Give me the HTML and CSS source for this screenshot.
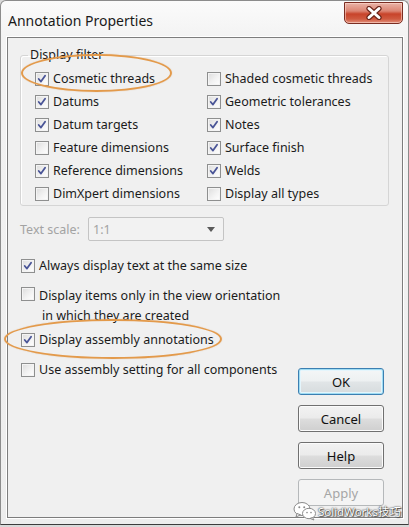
FILE: index.html
```html
<!DOCTYPE html>
<html>
<head>
<meta charset="utf-8">
<title>Annotation Properties</title>
<link rel="stylesheet" href="styles.css">
</head>
<body>
<div class="window">
  <div class="titlebar">
    <span class="title">Annotation Properties</span>
    <div class="close">
      <svg width="22" height="14" viewBox="0 0 22 14">
        <path d="M6 2.5 L16 11.5 M16 2.5 L6 11.5" stroke="#6b2418" stroke-width="5.2" stroke-linecap="round"/>
        <path d="M6 2.5 L16 11.5 M16 2.5 L6 11.5" stroke="#ffffff" stroke-width="3" stroke-linecap="round"/>
      </svg>
    </div>
  </div>
  <div class="client">
    <fieldset class="group">
      <legend>Display filter</legend>
      <div class="filter-grid">
        <label class="cb"><span class="box"><svg viewBox="0 0 14 14"><path d="M3.2 7 L5.8 10 L10.6 3.2"/></svg></span>Cosmetic threads</label>
        <label class="cb"><span class="box"></span>Shaded cosmetic threads</label>
        <label class="cb"><span class="box"><svg viewBox="0 0 14 14"><path d="M3.2 7 L5.8 10 L10.6 3.2"/></svg></span>Datums</label>
        <label class="cb"><span class="box"><svg viewBox="0 0 14 14"><path d="M3.2 7 L5.8 10 L10.6 3.2"/></svg></span>Geometric tolerances</label>
        <label class="cb"><span class="box"><svg viewBox="0 0 14 14"><path d="M3.2 7 L5.8 10 L10.6 3.2"/></svg></span>Datum targets</label>
        <label class="cb"><span class="box"><svg viewBox="0 0 14 14"><path d="M3.2 7 L5.8 10 L10.6 3.2"/></svg></span>Notes</label>
        <label class="cb"><span class="box"></span>Feature dimensions</label>
        <label class="cb"><span class="box"><svg viewBox="0 0 14 14"><path d="M3.2 7 L5.8 10 L10.6 3.2"/></svg></span>Surface finish</label>
        <label class="cb"><span class="box"><svg viewBox="0 0 14 14"><path d="M3.2 7 L5.8 10 L10.6 3.2"/></svg></span>Reference dimensions</label>
        <label class="cb"><span class="box"><svg viewBox="0 0 14 14"><path d="M3.2 7 L5.8 10 L10.6 3.2"/></svg></span>Welds</label>
        <label class="cb"><span class="box"></span>DimXpert dimensions</label>
        <label class="cb"><span class="box"></span>Display all types</label>
      </div>
    </fieldset>

    <div class="scale-row">
      <span class="scale-label">Text scale:</span>
      <div class="combo">
        <span class="combo-value">1:1</span>
        <svg class="combo-arrow" width="8" height="5" viewBox="0 0 8 5"><path d="M0 0 H8 L4 5 Z"/></svg>
      </div>
    </div>

    <div class="lower">
      <div class="options">
        <label class="opt opt-first"><span class="box"><svg viewBox="0 0 14 14"><path d="M3.2 7 L5.8 10 L10.6 3.2"/></svg></span>Always display text at the same size</label>
        <label class="opt opt-wide"><span class="box box-high"></span><span class="opt-text">Display items only in the view orientation<span class="second-line">in which they are created</span></span></label>
        <label class="opt opt-near"><span class="box"><svg viewBox="0 0 14 14"><path d="M3.2 7 L5.8 10 L10.6 3.2"/></svg></span>Display assembly annotations</label>
        <label class="opt opt-wide"><span class="box"></span>Use assembly setting for all components</label>
      </div>
      <div class="buttons">
        <div class="btn btn-default">OK</div>
        <div class="btn">Cancel</div>
        <div class="btn">Help</div>
        <div class="btn btn-disabled">Apply</div>
      </div>
    </div>

    <div class="mark mark-top"></div>
    <div class="mark mark-bottom"></div>
  </div>

  <div class="watermark">
    <svg class="wechat" width="24" height="20" viewBox="0 0 24 20">
      <ellipse cx="9" cy="8" rx="8" ry="6.5" fill="#ffffff" stroke="#8a8a8a" stroke-width="1"/>
      <path d="M4 12.5 L3 16 L7.5 13.8 Z" fill="#ffffff" stroke="#8a8a8a" stroke-width="1" stroke-linejoin="round"/>
      <ellipse cx="16" cy="12.5" rx="6.5" ry="5.2" fill="#ffffff" stroke="#8a8a8a" stroke-width="1"/>
      <path d="M19.5 16.5 L21 19 L17 17.4 Z" fill="#ffffff" stroke="#8a8a8a" stroke-width="1" stroke-linejoin="round"/>
      <circle cx="6.3" cy="6.3" r="1" fill="#8a8a8a"/>
      <circle cx="11.2" cy="6.3" r="1" fill="#8a8a8a"/>
      <circle cx="14" cy="11.6" r="0.8" fill="#8a8a8a"/>
      <circle cx="18" cy="11.6" r="0.8" fill="#8a8a8a"/>
    </svg>
    <span class="wm-text">SolidWorks技巧</span>
  </div>
</div>
</body>
</html>
```

FILE: styles.css
```css
html, body {
  margin: 0;
  padding: 0;
}

body {
  width: 409px;
  height: 527px;
  overflow: hidden;
  background: #d9d9d9;
  font-family: "Noto Sans", "Open Sans", "DejaVu Sans", sans-serif;
  font-size: 12.5px;
  color: #1b1b1b;
}

.window {
  position: relative;
  box-sizing: border-box;
  width: 409px;
  height: 525px;
  border: 1px solid #8c8c8c;
  border-bottom-color: #3c3c3c;
  border-radius: 6px 6px 0 0;
  background: linear-gradient(#fbfbfb, #f3f3f3 36px, #ededed);
  padding: 0 5px 6px 6px;
  display: flex;
  flex-direction: column;
}

/* ---------- title bar ---------- */
.titlebar {
  height: 36px;
  display: flex;
  justify-content: space-between;
  align-items: flex-start;
  padding-left: 1px;
}

.title {
  font-size: 14px;
  line-height: 20px;
  margin-top: 10px;
  color: #1a1a1a;
}

.close {
  box-sizing: border-box;
  width: 59px;
  height: 22px;
  margin-top: 1px;
  border: 1px solid #7a2d22;
  border-radius: 0 0 5px 5px;
  background: linear-gradient(#e9b3a7 0%, #dc8573 40%, #c8432a 55%, #cf5a40 80%, #e3907c 100%);
  box-shadow: inset 0 0 0 1px rgba(255, 220, 210, 0.55);
  display: flex;
  align-items: center;
  justify-content: center;
}

/* ---------- client area ---------- */
.client {
  position: relative;
  flex: 1;
  box-sizing: border-box;
  border: 1px solid #7d7d7d;
  background: #f0f0f0;
  display: flex;
  flex-direction: column;
  box-shadow: 0 0 0 1px #ffffff;
}

.group {
  margin: 9px 13px 0 12px;
  padding: 0;
  border: 1px solid #d5d5d5;
  border-radius: 3px;
  box-shadow: inset 1px 1px 0 #ffffff;
}

.group legend {
  margin-left: 7px;
  padding: 0 2px;
  font-size: 12.5px;
  line-height: 16px;
}

.filter-grid {
  display: grid;
  grid-template-columns: 172px 1fr;
  grid-auto-rows: 23px;
  padding: 4px 0 0 14px;
}

.cb {
  display: flex;
  align-items: center;
  white-space: nowrap;
}

.box {
  box-sizing: border-box;
  flex: none;
  width: 14px;
  height: 14px;
  margin-right: 4px;
  border: 1px solid #8e8f8f;
  background: linear-gradient(135deg, #dcdcdc 0%, #f2f2f2 55%, #ffffff 100%);
  box-shadow: inset 0 0 0 1px #f4f4f4;
  display: flex;
}

.box svg {
  width: 12px;
  height: 12px;
}

.box svg path {
  fill: none;
  stroke: #4a5597;
  stroke-width: 2.1;
  stroke-linecap: round;
  stroke-linejoin: round;
}

/* ---------- text scale ---------- */
.scale-row {
  display: flex;
  align-items: center;
  margin: 11px 0 0 12px;
  height: 24px;
}

.scale-label {
  width: 68px;
  color: #a3a3a3;
}

.combo {
  box-sizing: border-box;
  width: 136px;
  height: 24px;
  border: 1px solid #c4c4c4;
  border-radius: 2px;
  background: #f2f2f2;
  display: flex;
  align-items: center;
  justify-content: space-between;
  padding: 0 8px 0 4px;
}

.combo-value {
  color: #a3a3a3;
}

.combo-arrow path {
  fill: #5a5a5a;
}

/* ---------- lower options + buttons ---------- */
.lower {
  flex: 1;
  display: flex;
  justify-content: space-between;
}

.options {
  padding: 15px 0 0 13px;
  display: flex;
  flex-direction: column;
}

.opt {
  display: flex;
  align-items: flex-start;
  line-height: 20px;
  white-space: nowrap;
}

.opt .box {
  margin-top: 3px;
}

.opt .box-high {
  margin-top: 1px;
}

.opt-wide {
  margin-top: 10px;
}

.opt-near {
  margin-top: 4px;
}

.opt-text {
  display: flex;
  flex-direction: column;
}

.second-line {
  padding-left: 3px;
}

.buttons {
  align-self: flex-end;
  margin: 0 18px 11px 0;
  display: flex;
  flex-direction: column;
  gap: 10px;
}

.btn {
  box-sizing: border-box;
  width: 86px;
  height: 27px;
  border: 1px solid #707070;
  border-radius: 3px;
  background: linear-gradient(#f2f2f2 0%, #ebebeb 48%, #dddddd 52%, #cfcfcf 100%);
  box-shadow: inset 0 0 0 1px #fbfbfb;
  display: flex;
  align-items: center;
  justify-content: center;
  font-size: 13px;
  color: #111;
}

.btn-default {
  border-color: #3c7fb1;
  background: linear-gradient(#f4f6f7 0%, #edf0f1 48%, #e1e5e7 52%, #d6dbdd 100%);
  box-shadow: inset 0 0 0 1px #9fdcf3, inset 0 0 0 2px #e4f5fc;
}

.btn-disabled {
  border-color: #b5b8ba;
  background: #f4f4f4;
  box-shadow: none;
  color: #a6a6a6;
}

/* ---------- orange annotation marks ---------- */
.mark {
  position: absolute;
  box-sizing: border-box;
  border: 2px solid #e39a4b;
  border-radius: 50%;
  box-shadow: 0 0 1px rgba(200, 120, 40, 0.5);
}

.mark-top {
  left: 13px;
  top: 16px;
  width: 151px;
  height: 38px;
}

.mark-bottom {
  left: -4px;
  top: 281px;
  width: 218px;
  height: 40px;
}

/* ---------- watermark ---------- */
.watermark {
  position: absolute;
  right: 7px;
  bottom: 3px;
  display: flex;
  align-items: center;
  gap: 1px;
}

.wm-text {
  font-family: "Noto Sans", "Noto Sans CJK SC", sans-serif;
  font-size: 11.5px;
  color: #ffffff;
  text-shadow: 0 0 1px #333, 0 0 2px #444, 1px 1px 1px #555;
}
```
